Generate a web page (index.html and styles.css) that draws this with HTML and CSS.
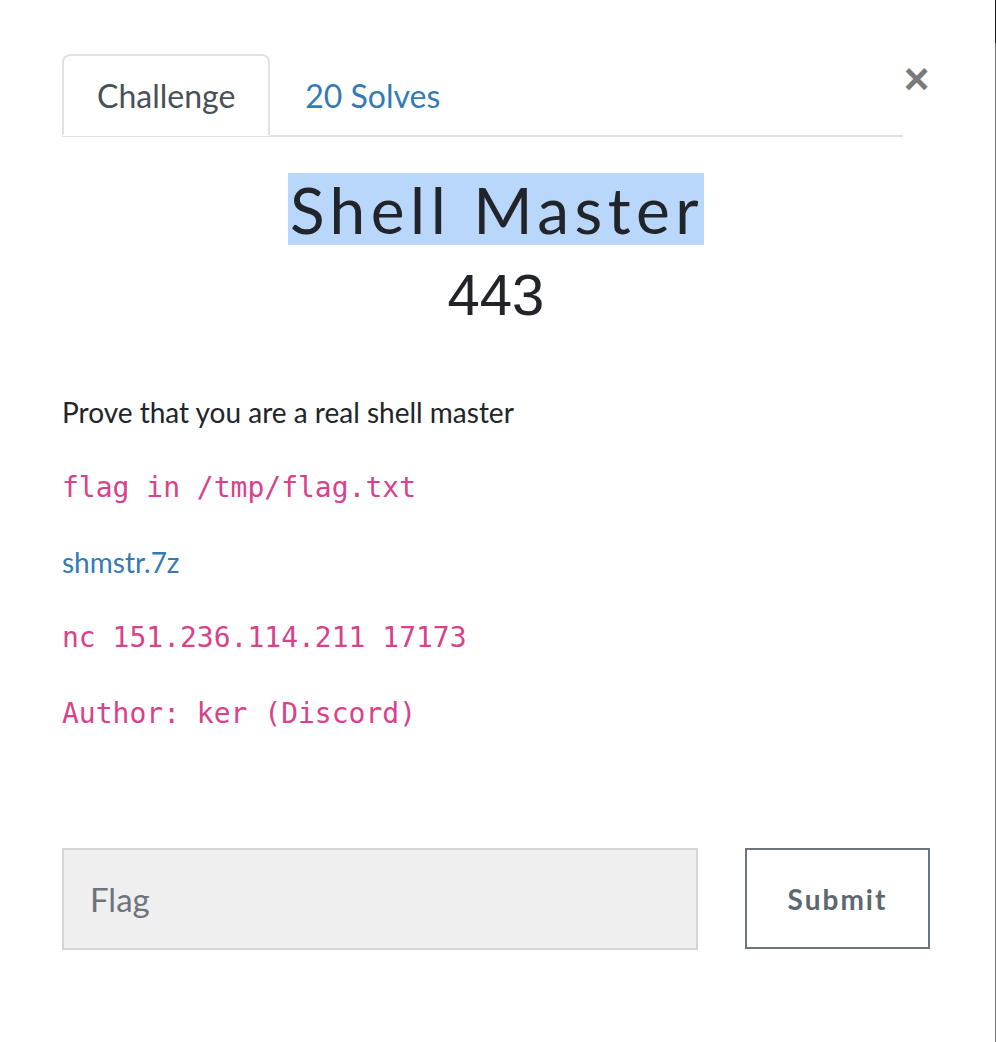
FILE: index.html
```html
<!DOCTYPE html>
<html>
<head>
<meta charset="utf-8">
<link rel="stylesheet" href="styles.css">
</head>
<body>
<div class="page">
  <div class="modal">
    <div class="header">
      <ul class="tabs">
        <li class="tab active">Challenge</li>
        <li class="tab link">20 Solves</li>
      </ul>
      <button class="close" aria-label="Close">&times;</button>
    </div>
    <div class="heading">
      <h2 class="title"><span class="sel">Shell Master</span></h2>
      <h3 class="value">443</h3>
    </div>
    <div class="desc">
      <p class="text">Prove that you are a real shell master</p>
      <p><code>flag in /tmp/flag.txt</code></p>
      <p><a class="file" href="#">shmstr.7z</a></p>
      <p><code>nc 151.236.114.211 17173</code></p>
      <p><code>Author: ker (Discord)</code></p>
    </div>
    <div class="submit-row">
      <input class="flag" type="text" placeholder="Flag">
      <button class="submit">Submit</button>
    </div>
  </div>
  <div class="edge"></div>
</div>
</body>
</html>
```
FILE: styles.css
```css
html, body {
  margin: 0;
  padding: 0;
  background: #fff;
}
body {
  font-family: "Lato", "Liberation Sans", sans-serif;
  color: #212529;
}
.page {
  display: flex;
  width: 996px;
  height: 1042px;
}
.modal {
  flex: 1;
  padding: 54px 65px 0 62px;
}
.edge {
  width: 2px;
  background: linear-gradient(#1c1c1c 0, #1c1c1c 43px, #737373 43px, #737373 100%);
}
.header {
  display: flex;
  align-items: flex-start;
}
.tabs {
  flex: 1;
  display: flex;
  list-style: none;
  margin: 0;
  padding: 0;
  border-bottom: 2px solid #dee2e6;
  height: 81px;
}
.tab {
  font-size: 32px;
  padding: 0 33px;
  height: 82px;
  line-height: 80px;
  box-sizing: border-box;
  border: 2px solid transparent;
  border-radius: 8px 8px 0 0;
}
.tab.active {
  color: #495057;
  border-color: #dee2e6;
  border-bottom-color: #fff;
  background: #fff;
}
.tab.link {
  color: #337ab7;
}
.close {
  width: 27px;
  margin-top: 5px;
  background: none;
  border: 0;
  padding: 0;
  font-family: "Liberation Sans", sans-serif;
  font-size: 44px;
  font-weight: 700;
  line-height: 40px;
  color: #7a7a7a;
}
.heading {
  text-align: center;
}
.title {
  margin: 36px 0 0;
  font-family: "Lato", sans-serif;
  font-weight: 400;
  font-size: 64px;
  line-height: 72px;
  height: 72px;
  letter-spacing: 5.5px;
}
.sel {
  display: inline-block;
  vertical-align: top;
  height: 72px;
  line-height: 74px;
  background: #b9d6fb;
  padding-left: 2px;
}
.value {
  margin: 17px 0 0;
  font-family: "Liberation Sans", sans-serif;
  font-weight: 400;
  font-size: 58px;
  line-height: 66px;
}
.desc {
  margin-top: 65px;
}
.desc p {
  margin: 0 0 36px;
  font-size: 28px;
  line-height: 38px;
}
.desc p.text {
  color: #212529;
}
code {
  font-family: "DejaVu Sans Mono", monospace;
  font-size: 28px;
  color: #d9428a;
}
.file {
  color: #337ab7;
  text-decoration: none;
}
.submit-row {
  display: flex;
  align-items: flex-start;
  margin-top: 115px;
  gap: 47px;
}
.flag {
  width: 636px;
  height: 102px;
  box-sizing: border-box;
  background: #efefef;
  border: 2px solid #d3d6d9;
  padding: 0 26px;
  font-family: "Lato", sans-serif;
  font-size: 33px;
  color: #495057;
  outline: none;
}
.flag::placeholder {
  color: #6c757d;
}
.submit {
  width: 185px;
  height: 101px;
  box-sizing: border-box;
  background: #fff;
  border: 2px solid #6c757d;
  font-family: "Lato", sans-serif;
  font-weight: 700;
  font-size: 28px;
  letter-spacing: 2px;
  color: #5d6770;
}
```
